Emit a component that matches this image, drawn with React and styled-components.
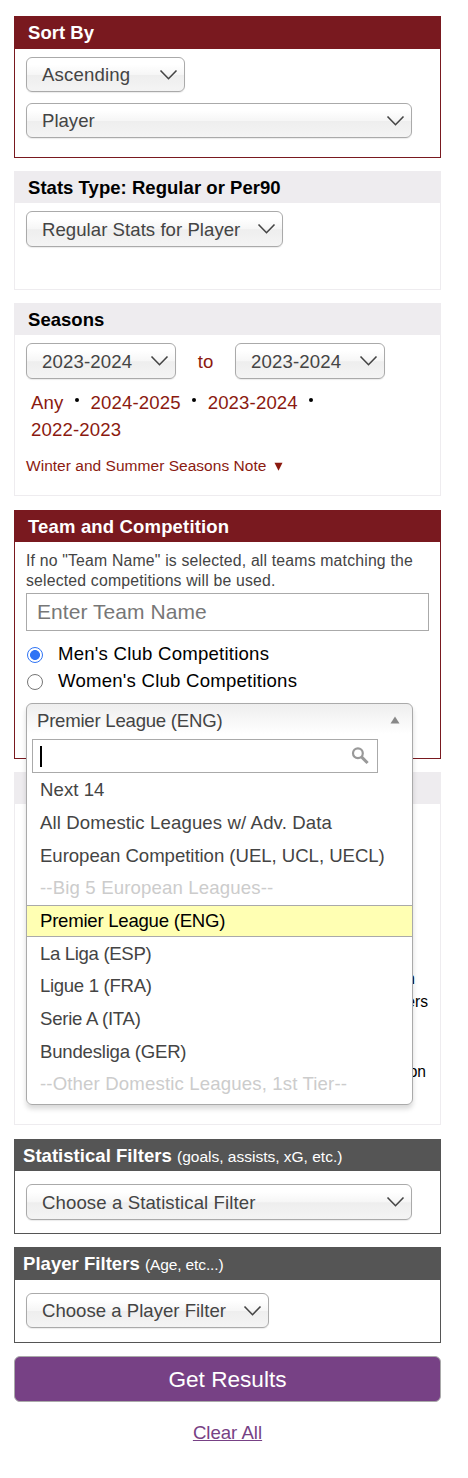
import React from "react";
import styled, { createGlobalStyle } from "styled-components";

const GlobalStyle = createGlobalStyle`
  * { box-sizing: border-box; }
  body {
    margin: 0;
    background: #fff;
    color: #000;
    font-family: "Liberation Sans", Helvetica, Arial, sans-serif;
    font-size: 18.6px;
    line-height: 27px;
  }
`;

const tones = {
  maroon: { bg: "#79191f", border: "#79191f", text: "#fff" },
  light: { bg: "#eeecef", border: "#eeecef", text: "#000" },
  dark: { bg: "#555", border: "#555", text: "#fff" },
};

const Form = styled.form`
  width: 427px;
  margin: 16px 0 0 14px;
  display: flex;
  flex-direction: column;
`;

const Panel = styled.section`
  position: relative;
  height: ${(p) => p.$height}px;
  margin-bottom: ${(p) => p.$gap || 13}px;
  border: 1px solid ${(p) => tones[p.$tone].border};
  border-top: 0;
`;

const PanelTitle = styled.h3`
  margin: 0 -1px;
  height: ${(p) => p.$height || 32}px;
  padding-left: ${(p) => (p.$tone === "dark" ? 9 : 14)}px;
  background: ${(p) => tones[p.$tone].bg};
  color: ${(p) => tones[p.$tone].text};
  font-size: 18.5px;
  font-weight: 700;
  letter-spacing: ${(p) => p.$tracking || 0.04}px;
  line-height: 33px;
  white-space: nowrap;
`;

const TitleNote = styled.span`
  font-size: 15.5px;
  font-weight: 400;
  letter-spacing: ${(p) => p.$tracking || 0}px;
`;

const PanelBody = styled.div`
  padding: ${(p) => p.$top || 8}px 11px 0;
`;

const SelectBox = styled.div`
  display: flex;
  align-items: center;
  justify-content: space-between;
  width: ${(p) => p.$width}px;
  height: ${(p) => p.$height || 36}px;
  padding: 0 6px 0 15px;
  border: 1px solid #aaa;
  border-radius: 6px;
  background: linear-gradient(#fff 20%, #f6f6f6 50%, #eee 52%, #f4f4f4 100%);
  box-shadow: 0 1px 1px rgba(0, 0, 0, 0.08);
  color: #444;
  letter-spacing: ${(p) => p.$tracking || 0}px;
  white-space: nowrap;
  & + & { margin-top: 11px; }
`;

const SeasonRow = styled.div`
  display: flex;
  align-items: center;
  justify-content: space-between;
  width: 359px;
  color: #8b1a10;
`;

const SeasonLinks = styled.div`
  display: flex;
  flex-wrap: wrap;
  width: 330px;
  margin: 10px 0 0 5px;
  color: #8b1a10;
  letter-spacing: 0.14px;
`;

const SeasonLink = styled.a`
  white-space: nowrap;
`;

const Dot = styled.span`
  width: 4px;
  height: 4px;
  margin: 9px 11.5px 0 11.5px;
  border-radius: 50%;
  background: #000;
`;

const NoteToggle = styled.div`
  display: flex;
  align-items: center;
  gap: 8px;
  margin-top: 13px;
  color: #8b1a10;
  font-size: 15.5px;
  letter-spacing: 0.03px;
  line-height: 20px;
`;

const Help = styled.p`
  margin: 0;
  padding-top: 1px;
  color: #444;
  font-size: 15.8px;
  letter-spacing: 0.18px;
  line-height: 20px;
  white-space: nowrap;
`;

const TeamField = styled.div`
  width: 403px;
  height: 38px;
  margin: 2px 0 9px;
  padding-left: 10px;
  border: 1px solid #aaa;
  color: #777;
  font-size: 21px;
  letter-spacing: 0.06px;
  line-height: 36px;
`;

const RadioRow = styled.label`
  display: flex;
  align-items: center;
  height: 27px;
  gap: 15px;
  padding-left: 1px;
  letter-spacing: 0.22px;
`;

const Radio = styled.span`
  width: 16px;
  height: 16px;
  margin-top: 2px;
  border-radius: 50%;
  border: ${(p) => (p.$on ? "1.5px solid #2f74f5" : "1px solid #767676")};
  background: ${(p) => (p.$on ? "radial-gradient(circle, #2f74f5 0 4.6px, #fff 5.3px)" : "#fff")};
`;

const Dropdown = styled.div`
  position: absolute;
  z-index: 2;
  top: 193px;
  left: 11px;
  width: 387px;
  height: 402px;
  border: 1px solid #aaa;
  border-radius: 6px;
  background: linear-gradient(#eee 0, #fff 30px);
  box-shadow: 0 4px 5px rgba(0, 0, 0, 0.15);
  color: #444;
`;

const DropdownValue = styled.div`
  display: flex;
  align-items: center;
  justify-content: space-between;
  height: 35px;
  padding: 0 12px 3px 10px;
  letter-spacing: -0.24px;
`;

const SearchField = styled.div`
  display: flex;
  align-items: center;
  justify-content: space-between;
  width: 346px;
  height: 34px;
  margin-left: 5px;
  padding: 0 8px 0 7px;
  border: 1px solid #aaa;
  background: #fff;
`;

const Caret = styled.span`
  width: 2px;
  height: 21px;
  margin-top: 1px;
  background: #000;
`;

const Options = styled.ul`
  list-style: none;
  margin: 0;
  padding: 0;
`;

const Option = styled.li`
  height: ${(p) => p.$height || 33}px;
  padding-left: 13px;
  line-height: 33px;
  letter-spacing: ${(p) => p.$tracking}px;
  white-space: nowrap;
  color: ${(p) => (p.$group ? "#ccc" : p.$active ? "#000" : "#444")};
  ${(p) => p.$active && `
    line-height: 30px;
    background: #ffffb3;
    border-top: 1px solid #aaa;
    border-bottom: 1px solid #aaa;
  `}
`;

const Aside = styled.div`
  display: flex;
  flex-direction: column;
  align-items: flex-end;
  padding: 163px 12px 0 0;
  font-size: 15.6px;
  line-height: 23px;
`;

const AsideLine = styled.span`
  margin: ${(p) => p.$top || 0}px ${(p) => p.$right || 0}px 0 0;
`;

const Submit = styled.button`
  height: 46px;
  padding: 1px 0 0;
  border: 1px solid #aaa;
  border-radius: 6px;
  background: #774185;
  color: #fff;
  font: 22.6px/43px "Liberation Sans", Helvetica, Arial, sans-serif;
`;

const Clear = styled.a`
  align-self: center;
  margin-top: 17px;
  color: #774185;
  text-decoration: underline;
`;

const Chevron = () => (
  <svg width="19" height="12" viewBox="0 0 19 12" fill="none">
    <path d="M1.5 1.5 9.5 9.7 17.5 1.5" stroke="#444" strokeWidth="1.6" />
  </svg>
);

const Select = ({ label, ...rest }) => (
  <SelectBox {...rest}>
    <span>{label}</span>
    <Chevron />
  </SelectBox>
);

const SearchIcon = () => (
  <svg width="18" height="18" viewBox="0 0 18 18" fill="none" stroke="#999">
    <circle cx="6.9" cy="6.2" r="4.9" strokeWidth="2.2" />
    <path d="M10.5 9.9 16.6 16" strokeWidth="3" />
  </svg>
);

const options = [
  { label: "Next 14", tracking: 0.06 },
  { label: "All Domestic Leagues w/ Adv. Data", tracking: 0.12 },
  { label: "European Competition (UEL, UCL, UECL)", tracking: -0.04, height: 32 },
  { label: "--Big 5 European Leagues--", tracking: 0.15, height: 34, group: true },
  { label: "Premier League (ENG)", tracking: -0.25, height: 32, active: true },
  { label: "La Liga (ESP)", tracking: -0.34, height: 32 },
  { label: "Ligue 1 (FRA)", tracking: -0.32 },
  { label: "Serie A (ITA)", tracking: -0.26 },
  { label: "Bundesliga (GER)", tracking: -0.22, height: 32 },
  { label: "--Other Domestic Leagues, 1st Tier--", tracking: 0.15, group: true },
];

export default function App() {
  return (
    <>
      <GlobalStyle />
      <Form>
        <Panel $tone="maroon" $height={142}>
          <PanelTitle $tone="maroon" $height={33}>Sort By</PanelTitle>
          <PanelBody>
            <Select label="Ascending" $width={159} $height={35} $tracking={0.16} />
            <Select label="Player" $width={386} $height={35} />
          </PanelBody>
        </Panel>

        <Panel $tone="light" $height={119}>
          <PanelTitle $tone="light">Stats Type: Regular or Per90</PanelTitle>
          <PanelBody>
            <Select label="Regular Stats for Player" $width={257} $tracking={0.04} />
          </PanelBody>
        </Panel>

        <Panel $tone="light" $height={193} $gap={14}>
          <PanelTitle $tone="light">Seasons</PanelTitle>
          <PanelBody>
            <SeasonRow>
              <Select label="2023-2024" $width={150} $tracking={0.16} />
              <span>to</span>
              <Select label="2023-2024" $width={150} $tracking={0.16} />
            </SeasonRow>
            <SeasonLinks>
              <SeasonLink>Any</SeasonLink>
              <Dot />
              <SeasonLink>2024-2025</SeasonLink>
              <Dot />
              <SeasonLink>2023-2024</SeasonLink>
              <Dot />
              <SeasonLink>2022-2023</SeasonLink>
            </SeasonLinks>
            <NoteToggle>
              <span>Winter and Summer Seasons Note</span>
              <svg width="9" height="9" viewBox="0 0 9 9" fill="#8b1a10">
                <path d="M0.5 0.8H8.5L4.5 8.8Z" />
              </svg>
            </NoteToggle>
          </PanelBody>
        </Panel>

        <Panel $tone="maroon" $height={249}>
          <PanelTitle $tone="maroon" $tracking={0.16}>Team and Competition</PanelTitle>
          <PanelBody>
            <Help>
              If no "Team Name" is selected, all teams matching the
              <br />
              selected competitions will be used.
            </Help>
            <TeamField>Enter Team Name</TeamField>
            <RadioRow>
              <Radio $on />
              Men's Club Competitions
            </RadioRow>
            <RadioRow>
              <Radio />
              Women's Club Competitions
            </RadioRow>
          </PanelBody>
          <Dropdown>
            <DropdownValue>
              <span>Premier League (ENG)</span>
              <svg width="10" height="8" viewBox="0 0 10 8" fill="#888">
                <path d="M5 0.5 9.5 7.5H0.5Z" />
              </svg>
            </DropdownValue>
            <SearchField>
              <Caret />
              <SearchIcon />
            </SearchField>
            <Options>
              {options.map((o) => (
                <Option
                  key={o.label}
                  $group={o.group}
                  $active={o.active}
                  $tracking={o.tracking}
                  $height={o.height}
                >
                  {o.label}
                </Option>
              ))}
            </Options>
          </Dropdown>
        </Panel>

        <Panel $tone="light" $height={353} $gap={14}>
          <PanelTitle $tone="light" />
          <Aside>
            <AsideLine $right={13}>n</AsideLine>
            <AsideLine>ers</AsideLine>
            <AsideLine $top={47} $right={2}>on</AsideLine>
          </Aside>
        </Panel>

        <Panel $tone="dark" $height={95}>
          <PanelTitle $tone="dark">
            Statistical Filters <TitleNote>(goals, assists, xG, etc.)</TitleNote>
          </PanelTitle>
          <PanelBody $top={13}>
            <Select label="Choose a Statistical Filter" $width={386} $tracking={0.1} />
          </PanelBody>
        </Panel>

        <Panel $tone="dark" $height={96}>
          <PanelTitle $tone="dark" $height={33}>
            Player Filters <TitleNote $tracking={-0.12}>(Age, etc...)</TitleNote>
          </PanelTitle>
          <PanelBody $top={13}>
            <Select label="Choose a Player Filter" $width={243} $height={35} />
          </PanelBody>
        </Panel>

        <Submit type="button">Get Results</Submit>
        <Clear>Clear All</Clear>
      </Form>
    </>
  );
}
